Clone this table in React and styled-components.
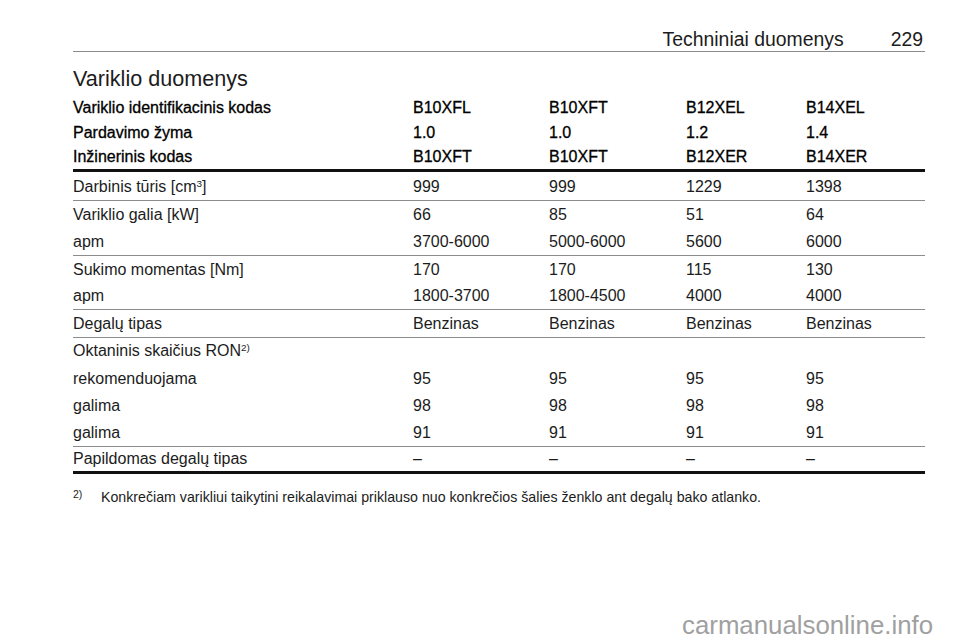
import React from "react";
import styled, { createGlobalStyle } from "styled-components";

const GlobalStyle = createGlobalStyle`
  html, body { margin: 0; padding: 0; background: #ffffff; }
  body {
    font-family: "Liberation Sans", Arial, Helvetica, sans-serif;
    color: #1c1c1c;
  }
`;

const Page = styled.div`
  position: relative;
  width: 960px;
  height: 642px;
  box-sizing: border-box;
  padding: 0 35px 0 73px;
  overflow: hidden;
`;

const RunningHead = styled.header`
  display: flex;
  justify-content: flex-end;
  align-items: flex-end;
  gap: 47px;
  height: 49px;
  padding: 0 2px 2px 0;
  border-bottom: 1.5px solid #8c8c8c;
  font-size: 19.4px;
  line-height: 1;
  color: #1c1c1c;
`;

const Title = styled.h1`
  margin: 16px 0 0;
  height: 27px;
  font-size: 21.6px;
  font-weight: 400;
  line-height: 21.6px;
`;

const Table = styled.div`
  display: flex;
  flex-direction: column;
`;

const Row = styled.div`
  display: grid;
  grid-template-columns: 340px 136px 137px 120px 1fr;
  align-items: center;
  height: ${(p) => p.$h}px;
  box-sizing: border-box;
  padding-top: ${(p) => p.$pt || 0}px;
  font-size: 16px;
  color: ${(p) => (p.$head ? "#000" : "#1c1c1c")};
  -webkit-text-stroke: ${(p) => (p.$head ? "0.3px #000" : "0")};
  border-bottom: ${(p) =>
    p.$rule === "thick"
      ? "3px solid #111"
      : p.$rule === "thin"
      ? "1.5px solid #8c8c8c"
      : "none"};
`;

const Cell = styled.span`
  white-space: nowrap;
`;

const Sup = styled.sup`
  font-size: 0.62em;
  line-height: 0;
  vertical-align: 0.55em;
`;

const Footnote = styled.p`
  display: flex;
  align-items: baseline;
  margin: 15px 0 0;
  font-size: 14.2px;
`;

const FootMark = styled.span`
  flex: 0 0 28px;
  font-size: 10.5px;
  position: relative;
  top: -4px;
`;

const Watermark = styled.div`
  position: absolute;
  right: 27px;
  bottom: 2px;
  font-size: 25.8px;
  color: #a0a0a0;
`;

const head = [
  ["Variklio identifikacinis kodas", "B10XFL", "B10XFT", "B12XEL", "B14XEL"],
  ["Pardavimo žyma", "1.0", "1.0", "1.2", "1.4"],
  ["Inžinerinis kodas", "B10XFT", "B10XFT", "B12XER", "B14XER"],
];

const body = [
  { cells: [<>Darbinis tūris [cm<Sup>3</Sup>]</>, "999", "999", "1229", "1398"], rule: "thin", h: 29.3, pt: 2.4 },
  { cells: ["Variklio galia [kW]", "66", "85", "51", "64"] },
  { cells: ["apm", "3700-6000", "5000-6000", "5600", "6000"], rule: "thin" },
  { cells: ["Sukimo momentas [Nm]", "170", "170", "115", "130"] },
  { cells: ["apm", "1800-3700", "1800-4500", "4000", "4000"], rule: "thin" },
  { cells: ["Degalų tipas", "Benzinas", "Benzinas", "Benzinas", "Benzinas"], rule: "thin" },
  { cells: [<>Oktaninis skaičius RON<Sup>2)</Sup></>, "", "", "", ""] },
  { cells: ["rekomenduojama", "95", "95", "95", "95"] },
  { cells: ["galima", "98", "98", "98", "98"] },
  { cells: ["galima", "91", "91", "91", "91"], rule: "thin" },
  { cells: ["Papildomas degalų tipas", "–", "–", "–", "–"], rule: "thick" },
];

export default function App() {
  return (
    <>
      <GlobalStyle />
      <Page>
        <RunningHead>
          <span>Techniniai duomenys</span>
          <span>229</span>
        </RunningHead>
        <Title>Variklio duomenys</Title>
        <Table>
          {head.map((r, i) => (
            <Row key={i} $head $h={i === 2 ? 27 : 25} $rule={i === 2 ? "thick" : undefined}>
              {r.map((c, j) => (
                <Cell key={j}>{c}</Cell>
              ))}
            </Row>
          ))}
          {body.map((r, i) => (
            <Row key={i} $h={r.h || 27.3} $pt={r.pt} $rule={r.rule}>
              {r.cells.map((c, j) => (
                <Cell key={j}>{c}</Cell>
              ))}
            </Row>
          ))}
        </Table>
        <Footnote>
          <FootMark>2)</FootMark>
          <span>
            Konkrečiam varikliui taikytini reikalavimai priklauso nuo konkrečios šalies ženklo ant degalų bako atlanko.
          </span>
        </Footnote>
        <Watermark>carmanualsonline.info</Watermark>
      </Page>
    </>
  );
}
